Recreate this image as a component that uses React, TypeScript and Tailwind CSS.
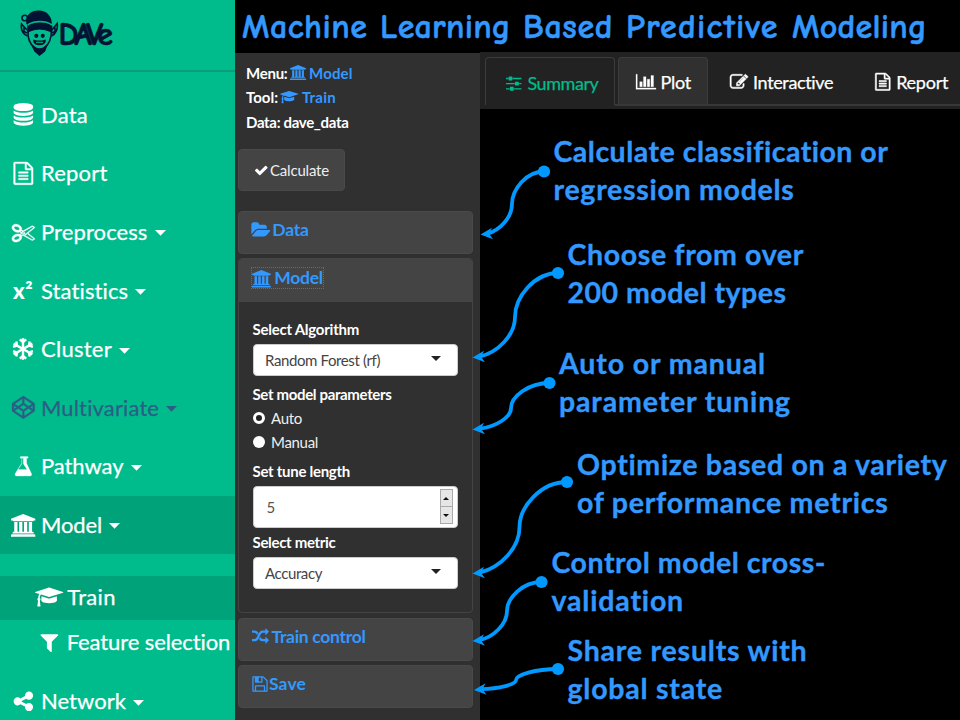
import { useLayoutEffect, useRef, type ReactNode } from "react";

type Glyph = { w: number; d: string };

const ICONS: Record<string, Glyph> = {
  database: { w: 1792, d: "M896 768q237 0 443-43t325-127v170q0 69-103 128t-280 93.5-385 34.5-385-34.5-280-93.5-103-128v-170q119 84 325 127t443 43zm0 768q237 0 443-43t325-127v170q0 69-103 128t-280 93.5-385 34.5-385-34.5-280-93.5-103-128v-170q119 84 325 127t443 43zm0-384q237 0 443-43t325-127v170q0 69-103 128t-280 93.5-385 34.5-385-34.5-280-93.5-103-128v-170q119 84 325 127t443 43zm0-1152q208 0 385 34.5t280 93.5 103 128v128q0 69-103 128t-280 93.5-385 34.5-385-34.5-280-93.5-103-128v-128q0-69 103-128t280-93.5 385-34.5z" },
  file: { w: 1792, d: "M1596 380q28 28 48 76t20 88v1152q0 40-28 68t-68 28h-1344q-40 0-68-28t-28-68v-1600q0-40 28-68t68-28h896q40 0 88 20t76 48zm-444-244v376h376q-10-29-22-41l-313-313q-12-12-41-22zm384 1528v-1024h-416q-40 0-68-28t-28-68v-416h-768v1536h1280zm-1024-864q0-14 9-23t23-9h704q14 0 23 9t9 23v64q0 14-9 23t-23 9h-704q-14 0-23-9t-9-23v-64zm736 224q14 0 23 9t9 23v64q0 14-9 23t-23 9h-704q-14 0-23-9t-9-23v-64q0-14 9-23t23-9h704zm0 256q14 0 23 9t9 23v64q0 14-9 23t-23 9h-704q-14 0-23-9t-9-23v-64q0-14 9-23t23-9h704z" },
  scissors: { w: 1792, d: "M960 896q26 0 45 19t19 45-19 45-45 19-45-19-19-45 19-45 45-19zm300 64l507 398q28 20 25 56-5 35-35 51l-128 64q-13 7-29 7-17 0-31-8l-690-387-110 66q-8 4-12 5 14 49 10 97-7 77-56 147.5t-132 123.5q-132 84-277 84-136 0-222-78-90-84-79-207 7-76 56-147t131-124q132-84 278-84 83 0 151 31 9-13 22-22l122-73-122-73q-13-9-22-22-68 31-151 31-146 0-278-84-82-53-131-124t-56-147q-5-59 15.5-113t63.5-93q85-79 222-79 145 0 277 84 83 52 132 123t56 148q4 48-10 97 4 1 12 5l110 66 690-387q14-8 31-8 16 0 29 7l128 64q30 16 35 51 3 36-25 56zm-681-260q46-42 21-108t-106-117q-92-59-192-59-74 0-113 36-46 42-21 108t106 117q92 59 192 59 74 0 113-36zm-85 745q81-51 106-117t-21-108q-39-36-113-36-100 0-192 59-81 51-106 117t21 108q39 36 113 36 100 0 192-59zm178-613l96 58v-11q0-36 33-56l14-8-79-47-26 26q-3 3-10 11t-12 12q-2 2-4 3.5t-3 2.5zm224 224l96 32 736-576-128-64-768 431v113l-160 96 9 8q2 2 7 6 4 4 11 12t11 12l26 26zm704 416l128-64-520-408-177 138q-2 3-13 7z" },
  codepen: { w: 1792, d: "M216 1169l603 402v-359l-334-223zm-62-144l193-129-193-129v258zm819 546l603-402-269-180-334 223v359zm-77-493l272-182-272-182-272 182zm-411-275l334-223v-359l-603 402zm960 93l193 129v-258zm-138-93l269-180-603-402v359zm485-180v546q0 41-34 64l-819 546q-21 13-43 13t-43-13l-819-546q-34-23-34-64v-546q0-41 34-64l819-546q21-13 43-13t43 13l819 546q34 23 34 64z" },
  flask: { w: 1792, d: "M1527 1447q56 89 21.5 153t-140.5 64h-1024q-106 0-140.5-64t21.5-153l503-793v-399h-64q-26 0-45-19t-19-45 19-45 45-19h512q26 0 45 19t19 45-19 45-45 19h-64v399zm-779-725l-272 430h712l-272-430-20-31v-436h-128v436z" },
  bank: { w: 1920, d: "M960 0l960 384v128h-128q0 26-20.5 45t-48.5 19h-1526q-28 0-48.5-19t-20.5-45h-128v-128zm-704 640h256v768h128v-768h256v768h128v-768h256v768h128v-768h256v768h59q28 0 48.5 19t20.5 45v64h-1664v-64q0-26 20.5-45t48.5-19h59v-768zm1595 960q28 0 48.5 19t20.5 45v128h-1920v-128q0-26 20.5-45t48.5-19h1782z" },
  cap: { w: 2304, d: "M1774 836l18 316q4 69-82 128t-235 93.5-323 34.5-323-34.5-235-93.5-82-128l18-316 574 181q22 7 48 7t48-7zm530-324q0 23-22 31l-1120 352q-4 1-10 1t-10-1l-652-206q-43 34-71 111.5t-34 178.5q63 36 63 109 0 69-58 107l58 433q2 14-8 25-9 11-24 11h-192q-15 0-24-11-10-11-8-25l58-433q-58-38-58-107 0-73 65-111 11-207 98-330l-333-104q-22-8-22-31t22-31l1120-352q4-1 10-1t10 1l1120 352q22 8 22 31z" },
  filter: { w: 1792, d: "M1595 295q17 41-14 70l-493 493v742q0 42-39 59-13 5-25 5-27 0-45-19l-256-256q-19-19-19-45v-486l-493-493q-31-29-14-70 17-39 59-39h1280q42 0 59 39z" },
  share: { w: 1792, d: "M1344 1024q133 0 226.5 93.5t93.5 226.5-93.5 226.5-226.5 93.5-226.5-93.5-93.5-226.5q0-12 2-34l-360-180q-92 86-218 86-133 0-226.5-93.5t-93.5-226.5 93.5-226.5 226.5-93.5q126 0 218 86l360-180q-2-22-2-34 0-133 93.5-226.5t226.5-93.5 226.5 93.5 93.5 226.5-93.5 226.5-226.5 93.5q-126 0-218-86l-360 180q2 22 2 34t-2 34l360 180q92-86 218-86z" },
  sliders: { w: 1536, d: "M352 1408v128h-352v-128h352zm352-128q26 0 45 19t19 45v256q0 26-19 45t-45 19h-256q-26 0-45-19t-19-45v-256q0-26 19-45t45-19h256zm160-384v128h-864v-128h864zm-640-512v128h-224v-128h224zm1312 1024v128h-736v-128h736zm-960-1152q26 0 45 19t19 45v256q0 26-19 45t-45 19h-256q-26 0-45-19t-19-45v-256q0-26 19-45t45-19h256zm640 512q26 0 45 19t19 45v256q0 26-19 45t-45 19h-256q-26 0-45-19t-19-45v-256q0-26 19-45t45-19h256zm320 128v128h-224v-128h224zm0-512v128h-864v-128h864z" },
  chart: { w: 2048, d: "M640 896v512h-256v-512h256zm384-512v1024h-256v-1024h256zm1024 1152v128h-2048v-1536h128v1408h1920zm-640-896v768h-256v-768h256zm384-384v1152h-256v-1152h256z" },
  pencil: { w: 1792, d: "M888 1184l116-116-152-152-116 116v56h96v96h56zm440-720q-16-16-33 1l-350 350q-17 17-1 33t33-1l350-350q17-17 1-33zm80 594v190q0 119-84.5 203.5t-203.5 84.5h-832q-119 0-203.5-84.5t-84.5-203.5v-832q0-119 84.5-203.5t203.5-84.5h832q63 0 117 25 15 7 18 23 3 17-9 29l-49 49q-14 14-32 8-23-6-45-6h-832q-66 0-113 47t-47 113v832q0 66 47 113t113 47h832q66 0 113-47t47-113v-126q0-13 9-22l64-64q15-15 35-7t20 29zm-96-738l288 288-672 672h-288v-288zm444 132l-92 92-288-288 92-92q28-28 68-28t68 28l152 152q28 28 28 68t-28 68z" },
  check: { w: 1792, d: "M1671 566q0 40-28 68l-724 724-136 136q-28 28-68 28t-68-28l-136-136-362-362q-28-28-28-68t28-68l136-136q28-28 68-28t68 28l294 295 656-657q28-28 68-28t68 28l136 136q28 28 28 68z" },
  folder: { w: 1820, d: "M1815 952q0 31-31 66l-336 396q-43 51-120.5 86.5t-143.5 35.5h-1088q-34 0-60.5-13t-26.5-43q0-31 31-66l336-396q43-51 120.5-86.5t143.5-35.5h1088q34 0 60.5 13t26.5 43zm-343-344v160h-832q-94 0-197 47.5t-164 119.5l-337 396-5 6q0-4-.5-12.5t-.5-12.5v-960q0-92 66-158t158-66h320q92 0 158 66t66 158v32h544q92 0 158 66t66 158z" },
  random: { w: 1792, d: "M666 481q-60 92-137 273-22-45-37-72.5t-40.5-63.5-51-56.5-63-35-81.5-14.5h-224q-14 0-23-9t-9-23v-192q0-14 9-23t23-9h224q250 0 410 225zm1126 799q0 14-9 23l-320 320q-9 9-23 9-13 0-22.5-9.5t-9.5-22.5v-192q-32 0-85 .5t-81 1-73-1-71-5-64-10.5-63-18.5-58-28.5-59-40-55-53.5-56-69.5q59-93 136-273 22 45 37 72.5t40.5 63.5 51 56.5 63 35 81.5 14.5h256v-192q0-14 9-23t23-9q12 0 24 10l319 319q9 9 9 23zm0-896q0 14-9 23l-320 320q-9 9-23 9-13 0-22.5-9.5t-9.5-22.5v-192h-256q-48 0-87 15t-69 45-51 61.5-45 77.5q-32 62-78 171-29 66-49.5 111t-54 105-64 100-74 83-90 68.5-106.5 42-128 16.5h-224q-14 0-23-9t-9-23v-192q0-14 9-23t23-9h224q48 0 87-15t69-45 51-61.5 45-77.5q32-62 78-171 29-66 49.5-111t54-105 64-100 74-83 90-68.5 106.5-42 128-16.5h256v-192q0-14 9-23t23-9q12 0 24 10l319 319q9 9 9 23z" },
  floppy: { w: 1792, d: "M512 1536h768v-384h-768v384zm896 0h128v-896q0-14-10-38.5t-20-34.5l-281-281q-10-10-34-20t-39-10v416q0 40-28 68t-68 28h-576q-40 0-68-28t-28-68v-416h-128v1280h128v-416q0-40 28-68t68-28h832q40 0 68 28t28 68v416zm-384-928v-320q0-13-9.5-22.5t-22.5-9.5h-192q-13 0-22.5 9.5t-9.5 22.5v320q0 13 9.5 22.5t22.5 9.5h192q13 0 22.5-9.5t9.5-22.5zm640 32v928q0 40-28 68t-68 28h-1344q-40 0-68-28t-28-68v-1344q0-40 28-68t68-28h928q40 0 88 20t76 48l280 280q28 28 48 76t20 88z" },
};

function Icon({ name, size, weight = 0 }: { name: string; size: number; weight?: number }) {
  const g = ICONS[name];
  return (
    <svg className="block shrink-0 overflow-visible" width={(g.w / 1792) * size} height={size} viewBox={`0 0 ${g.w} 1792`} fill="currentColor" stroke="currentColor" strokeWidth={weight}>
      <path d={g.d} />
    </svg>
  );
}

/** A single line of text whose tracking is adjusted to span exactly `w` pixels. */
function Fit({ w, children, className = "" }: { w: number; children: string; className?: string }) {
  const ref = useRef<HTMLSpanElement>(null);
  useLayoutEffect(() => {
    const el = ref.current;
    if (!el) return;
    el.style.letterSpacing = "0px";
    const natural = el.getBoundingClientRect().width;
    const gap = (w - natural) / children.length;
    el.style.letterSpacing = `${gap}px`;
  }, [w, children]);
  return (
    <span ref={ref} className={`inline-block shrink-0 whitespace-pre ${className}`}>
      {children}
    </span>
  );
}

function Caret({ className = "" }: { className?: string }) {
  return (
    <svg className={`block shrink-0 ${className}`} width="11" height="6" viewBox="0 0 11 6" fill="currentColor">
      <path d="M0 0H11L5.5 5.8Z" />
    </svg>
  );
}

function Snowflake() {
  return (
    <svg width="22" height="22" viewBox="-11 -11 22 22" fill="none" stroke="currentColor" strokeWidth="2.4">
      {[0, 60, 120, 180, 240, 300].map((a) => (
        <path key={a} transform={`rotate(${a})`} d="M0 0V-10.8M-3.2 -9.6L0 -6.9L3.2 -9.6" />
      ))}
    </svg>
  );
}

function NavRow({ icon, label, w, caret = true, className = "" }: { icon: ReactNode; label: string; w: number; caret?: boolean; className?: string }) {
  return (
    <div className={`flex h-[58.6px] shrink-0 items-center pl-[10px] ${className}`}>
      <span className="flex w-[26px] justify-center">{icon}</span>
      <Fit w={w} className="ml-[5px] text-[22px] leading-[28px] [-webkit-text-stroke:0.25px]">{label}</Fit>
      {caret && <Caret className="mt-[3px] ml-[7px]" />}
    </div>
  );
}

function Logo() {
  return (
    <div className="flex h-[71.5px] shrink-0 items-start border-b-2 border-[#0a9f7a] pt-[10px] pl-[20px] text-[#041333]">
      <svg width="39" height="46" viewBox="0 0 39 46" fill="none" stroke="currentColor" strokeWidth="1.6">
        <circle cx="4.8" cy="8" r="2.8" />
        <path d="M7 13C6 5 12 1 19 1.3C26 1.5 31 6 31 14C24 10 14 10 8 15Z" fill="currentColor" />
        <path d="M8 17C15 12 25 12 31.5 16V21.5C24 18 15 18 8 21.5Z" fill="currentColor" />
        <path d="M7.5 14.8C15 10.3 25 10.3 32 14.8" stroke="#00bc8c" strokeWidth="1.5" />
        <path d="M7 20L1.5 14C.8 19 2.5 24 7.5 26M32 20L37.2 13.5C38 18.5 36 24 31.5 26M4 17.5V21.5L7 23M35 17.5V21.5L32 23" />
        <path d="M8 20C7.5 28 9 34 15 38L19.5 41L24 38C30 34 31.5 28 31.5 20" />
        <path d="M13 37C17 39.5 22 39.5 26 37L24.5 41L19.5 45L15 41Z" fill="currentColor" />
        <circle cx="16.3" cy="25.8" r="1.3" fill="currentColor" />
        <circle cx="22.7" cy="25.8" r="1.3" fill="currentColor" />
        <path d="M14 30.5C17 31.5 22 31.5 25 30.5C25.5 33 23 34.5 19.5 34.5S13.5 33 14 30.5Z" fill="currentColor" />
        <path d="M16 32.3H23" stroke="#00bc8c" strokeWidth="1" />
      </svg>
      <Fit w={50.5} className="-ml-[0.5px] mt-[5.5px] font-['Comic_Sans_MS','Comic_Neue','Open_Sans',sans-serif] text-[32px] leading-[38px] font-bold [-webkit-text-stroke:0.7px]">DAVe</Fit>
    </div>
  );
}

function Sidebar() {
  return (
    <aside className="flex h-[720px] w-[235px] shrink-0 flex-col overflow-hidden bg-[#00bc8c] text-white">
      <Logo />
      <nav className="mt-[14px] flex flex-col">
        <NavRow icon={<Icon name="database" size={22.7} />} label="Data" w={47} caret={false} />
        <NavRow icon={<Icon name="file" size={22.7} weight={30} />} label="Report" w={66.5} caret={false} />
        <NavRow icon={<Icon name="scissors" size={22.7} weight={40} />} label="Preprocess" w={106.5} />
        <NavRow icon={<Fit w={20} className="text-[22px] leading-[28px] font-black">x²</Fit>} label="Statistics" w={88} />
        <NavRow icon={<Snowflake />} label="Cluster" w={71} />
        <NavRow icon={<Icon name="codepen" size={22.7} weight={20} />} label="Multivariate" w={118.5} className="text-[#2c5e85]" />
        <NavRow icon={<Icon name="flask" size={22.7} weight={20} />} label="Pathway" w={82.5} />
        <NavRow icon={<Icon name="bank" size={22.7} />} label="Model" w={61} className="bg-[#00a379]" />
        <div className="mt-[21.7px] flex h-[44.3px] items-center bg-[#00a379] pb-[2px] pl-[35px]">
          <Icon name="cap" size={22} />
          <Fit w={48.5} className="ml-[4px] text-[22px] leading-[28px] [-webkit-text-stroke:0.25px]">Train</Fit>
        </div>
        <div className="flex h-[44.5px] items-center pb-[1px] pl-[37.5px]">
          <Icon name="filter" size={22.7} />
          <Fit w={164} className="ml-[6.5px] text-[22px] leading-[28px] [-webkit-text-stroke:0.25px]">Feature selection</Fit>
        </div>
        <NavRow icon={<Icon name="share" size={22.7} />} label="Network" w={85} className="mt-[7px]" />
      </nav>
    </aside>
  );
}

function PanelHeader({ children, className = "" }: { children: ReactNode; className?: string }) {
  return (
    <div className={`flex h-[43px] w-[235px] shrink-0 items-center rounded-[4px] border border-[#4a4a4a] bg-[#444] pb-[5px] pl-[13px] text-[17.5px] leading-[20px] font-bold text-[#3399ff] ${className}`}>
      {children}
    </div>
  );
}

function Select({ label, w, className = "" }: { label: string; w: number; className?: string }) {
  return (
    <div className={`flex h-[32px] w-[205px] items-center justify-between rounded-[4px] border border-[#ccc] bg-white pr-[15.5px] pl-[11.5px] text-[#444] ${className}`}>
      <Fit w={w} className="text-[15px] leading-[20px]">{label}</Fit>
      <span className="mb-[3px] block h-0 w-0 border-x-[5px] border-t-[5px] border-x-transparent border-t-[#222]" />
    </div>
  );
}

function ControlPanel() {
  return (
    <section className="flex w-[245px] shrink-0 flex-col bg-[#303030] px-[3px] pt-[9.5px] text-[15px] leading-[20px] text-white">
      <div className="flex flex-col gap-[4.8px] pl-[8px] font-bold">
        <div className="flex h-[20px] items-center">
          <Fit w={41.5}>Menu:</Fit>
          <span className="ml-[2.5px] text-[#3399ff]"><Icon name="bank" size={15} /></span>
          <Fit w={43.5} className="ml-[3px] text-[#3399ff]">Model</Fit>
        </div>
        <div className="flex h-[20px] items-center">
          <Fit w={32}>Tool:</Fit>
          <span className="ml-[2px] text-[#3399ff]"><Icon name="cap" size={14.3} /></span>
          <Fit w={34} className="ml-[3.5px] text-[#3399ff]">Train</Fit>
        </div>
        <div className="flex h-[20px] items-center">
          <Fit w={102.5}>Data: dave_data</Fit>
        </div>
      </div>

      <div className="mt-[17px] flex h-[42px] w-[107px] shrink-0 items-center rounded-[4px] border border-[#4a4a4a] bg-[#444] pl-[15px]">
        <Icon name="check" size={14.5} />
        <Fit w={59} className="ml-[1.5px] text-[#eee]">Calculate</Fit>
      </div>

      <PanelHeader className="mt-[19.5px]">
        <Icon name="folder" size={18} />
        <Fit w={36.5} className="ml-[2px]">Data</Fit>
      </PanelHeader>

      <div className="mt-[4.5px] flex h-[355px] w-[235px] shrink-0 flex-col rounded-[4px] border border-[#444]">
        <div className="flex h-[42.5px] shrink-0 items-center rounded-t-[3px] bg-[#444] pb-[4px] pl-[13px] text-[17.5px] leading-[20px] font-bold text-[#3399ff]">
          <span className="flex items-center outline-1 outline-dotted outline-[#3377bb]">
            <Icon name="bank" size={17.5} />
            <Fit w={48.5} className="ml-[3.5px]">Model</Fit>
          </span>
        </div>
        <div className="flex flex-col items-start pl-[13.5px]">
          <Fit w={106.5} className="mt-[17px] font-bold">Select Algorithm</Fit>
          <Select label="Random Forest (rf)" w={115} className="mt-[5px]" />
          <Fit w={139} className="mt-[8.3px] font-bold">Set model parameters</Fit>
          <label className="mt-[4px] flex h-[20px] items-center text-[#eee]">
            <span className="block h-[12px] w-[12px] rounded-full border-[3px] border-white bg-[#222]" />
            <Fit w={31} className="ml-[6.5px]">Auto</Fit>
          </label>
          <label className="mt-[4.5px] flex h-[20px] items-center text-[#eee]">
            <span className="block h-[12px] w-[12px] rounded-full bg-white" />
            <Fit w={47} className="ml-[6.5px]">Manual</Fit>
          </label>
          <Fit w={97.5} className="mt-[8.5px] font-bold">Set tune length</Fit>
          <div className="mt-[4.7px] flex h-[42.5px] w-[205px] items-center justify-between rounded-[4px] border border-[#ccc] bg-white pr-[4px] pl-[13px] text-[#555]">
            <span>5</span>
            <span className="flex h-[35px] w-[13px] flex-col border border-[#aaa] bg-[#e6e6e6]">
              <span className="flex flex-1 items-center justify-center border-b border-[#aaa]">
                <span className="block h-0 w-0 border-x-[3px] border-b-[3px] border-x-transparent border-b-[#111]" />
              </span>
              <span className="flex flex-1 items-center justify-center">
                <span className="block h-0 w-0 border-x-[3px] border-t-[3px] border-x-transparent border-t-[#111]" />
              </span>
            </span>
          </div>
          <Fit w={83} className="mt-[4px] font-bold">Select metric</Fit>
          <Select label="Accuracy" w={57} className="mt-[4.5px]" />
        </div>
      </div>

      <PanelHeader className="mt-[4.5px]">
        <Icon name="random" size={17} />
        <Fit w={94} className="ml-[2.5px]">Train control</Fit>
      </PanelHeader>
      <PanelHeader className="mt-[4.5px]">
        <span className="-ml-[1px]"><Icon name="floppy" size={18} /></span>
        <Fit w={37}>Save</Fit>
      </PanelHeader>
    </section>
  );
}

function Tabs() {
  return (
    <div className="flex h-[57px] w-[480px] shrink-0 overflow-hidden bg-[#222] pt-[5px] text-[18px] leading-[24px] text-white [-webkit-text-stroke:0.25px]">
      <div className="ml-[5px] flex h-[48px] w-[130px] shrink-0 items-center rounded-t-[4px] border border-b-0 border-[#3c3c3c] pt-[2px] pl-[20px] text-[#00bc8c]">
        <Icon name="sliders" size={18} />
        <Fit w={71} className="ml-[6px]">Summary</Fit>
      </div>
      <div className="flex h-[49px] w-[345px] shrink-0 border-b-2 border-[#383838] pl-[3px]">
        <div className="flex w-[90px] shrink-0 items-center rounded-t-[4px] border border-b-0 border-[#3c3c3c] bg-[#303030] pt-[2px] pl-[17px]">
          <Icon name="chart" size={17.5} weight={30} />
          <Fit w={30.5} className="ml-[4.5px]">Plot</Fit>
        </div>
        <div className="flex items-center pt-[2px] pl-[22px]">
          <Icon name="pencil" size={18} weight={50} />
          <Fit w={80.5} className="ml-[5px]">Interactive</Fit>
        </div>
        <div className="flex items-center pt-[2px] pl-[40.5px]">
          <Icon name="file" size={17.5} weight={50} />
          <Fit w={52} className="ml-[5px]">Report</Fit>
        </div>
      </div>
    </div>
  );
}

function Callout({ lines, className }: { lines: [string, number][]; className: string }) {
  return (
    <div className={`flex flex-col items-start text-[28.5px] leading-[38px] font-bold [-webkit-text-stroke:0.35px] ${className}`}>
      {lines.map(([text, w]) => (
        <Fit key={text} w={w}>{text}</Fit>
      ))}
    </div>
  );
}

type Pt = [number, number];

/** Dot, double-curved line and arrow head joining a callout to its control. */
function Arrow({ from, mid, tip }: { from: Pt; mid: Pt; tip: Pt }) {
  const dx = from[0] - mid[0];
  const dy = mid[1] - from[1];
  const ex = mid[0] - tip[0];
  const ey = tip[1] - mid[1];
  const d = `M${from[0]} ${from[1]} C${from[0] - dx * 0.55} ${from[1]} ${mid[0]} ${mid[1] - dy * 0.45} ${mid[0]} ${mid[1]} C${mid[0]} ${mid[1] + ey * 0.45} ${tip[0] + ex * 0.6} ${tip[1] - ey * 0.13} ${tip[0] + 7} ${tip[1] - 0.8}`;
  return (
    <g>
      <path d={d} fill="none" stroke="#0099ff" strokeWidth="3.8" />
      <circle cx={from[0]} cy={from[1]} r="6.1" fill="#0099ff" />
      <path transform={`translate(${tip[0]} ${tip[1]})`} d="M0 0L11.5 -6.8L8.5 -.8L12.5 4.8Z" fill="#0099ff" />
    </g>
  );
}

export default function App() {
  return (
    <div className="relative flex h-[720px] w-[960px] overflow-hidden bg-black font-['Lato',sans-serif]">
      <Sidebar />
      <div className="flex w-[725px] flex-col">
        <h1 className="flex h-[52px] shrink-0 items-start pt-[4.5px] pl-[7px] font-['Comic_Sans_MS','Comic_Neue','Open_Sans',sans-serif] text-[34px] leading-[44px] font-bold text-[#3399ff] [-webkit-text-stroke:0.5px]">
          <Fit w={138}>{"Machine "}</Fit>
          <Fit w={143}>{"Learning "}</Fit>
          <Fit w={103}>{"Based "}</Fit>
          <Fit w={166}>{"Predictive "}</Fit>
          <Fit w={135}>Modeling</Fit>
        </h1>
        <div className="flex h-[668px]">
          <div className="flex border-t border-black">
            <ControlPanel />
          </div>
          <div className="flex w-[480px] flex-col">
            <Tabs />
            <div className="flex flex-col pt-[23px] text-[#3399ff]">
              <Callout className="ml-[73.5px]" lines={[["Calculate classification or", 335], ["regression models", 241]]} />
              <Callout className="mt-[26.6px] ml-[87.5px]" lines={[["Choose from over", 236.5], ["200 model types", 219]]} />
              <Callout className="mt-[33.7px] ml-[79px]" lines={[["Auto or manual", 207], ["parameter tuning", 232]]} />
              <Callout className="mt-[25px] ml-[97px]" lines={[["Optimize based on a variety", 371], ["of performance metrics", 311.5]]} />
              <Callout className="mt-[22px] ml-[71.5px]" lines={[["Control model cross-", 274.5], ["validation", 133]]} />
              <Callout className="mt-[11.3px] ml-[87.5px]" lines={[["Share results with", 240], ["global state", 155.5]]} />
            </div>
          </div>
        </div>
      </div>
      <svg className="pointer-events-none absolute inset-0" width="960" height="720" viewBox="0 0 960 720">
        <Arrow from={[544, 171.5]} mid={[512, 204]} tip={[480.5, 234.5]} />
        <Arrow from={[558, 273]} mid={[515, 317]} tip={[472.5, 357.5]} />
        <Arrow from={[549.5, 383]} mid={[511, 408]} tip={[472.5, 429.5]} />
        <Arrow from={[567, 482]} mid={[519.5, 527]} tip={[472.5, 573.5]} />
        <Arrow from={[541.5, 582]} mid={[507, 611]} tip={[472.5, 641]} />
        <Arrow from={[558, 669]} mid={[516, 680]} tip={[474, 690]} />
      </svg>
    </div>
  );
}
